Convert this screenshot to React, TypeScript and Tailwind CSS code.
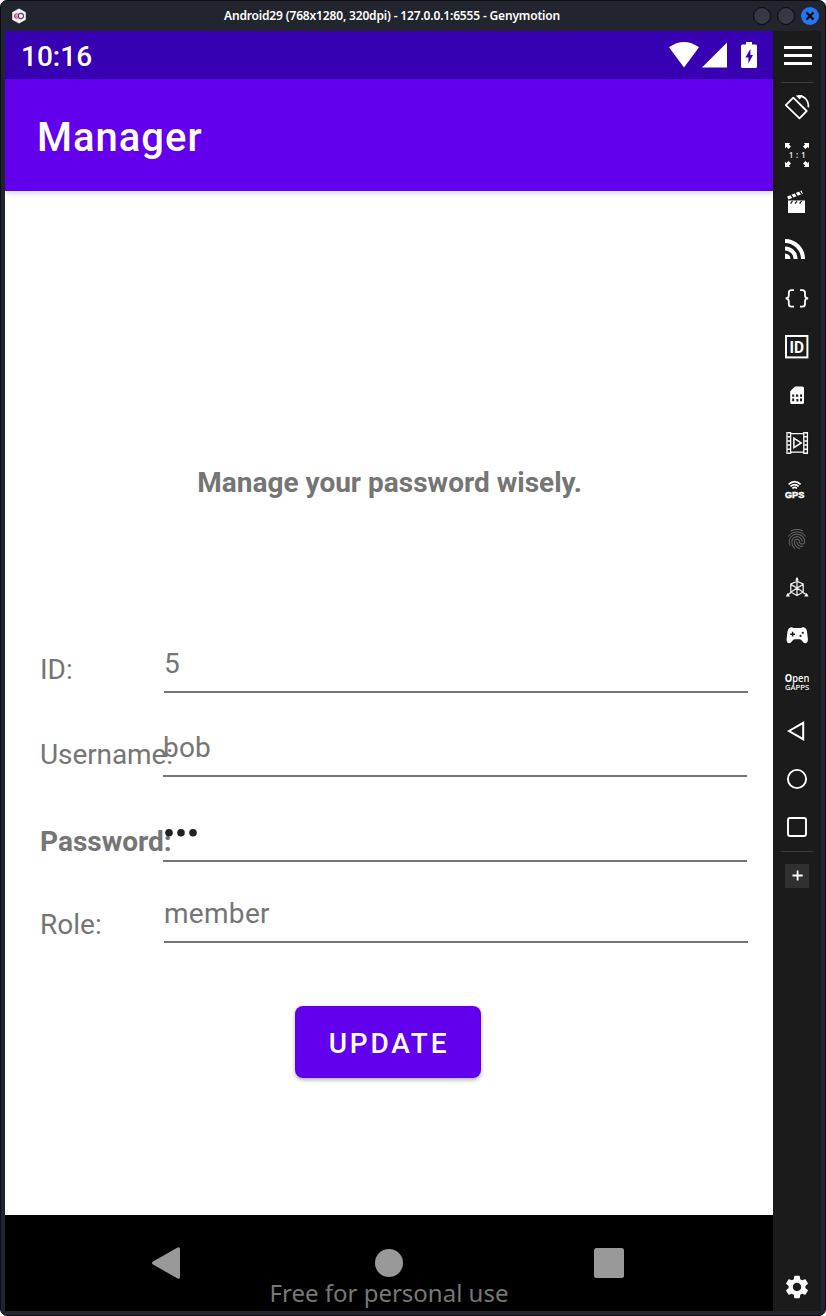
import React from 'react';
import { MdFingerprint, MdSettings } from 'react-icons/md';

function Cell({ children }: { children: React.ReactNode }) {
  return (
    <svg className="block h-12 w-12 shrink-0" viewBox="0 0 48 48" fill="none" stroke="none">
      {children}
    </svg>
  );
}

function Sidebar() {
  return (
    <aside className="flex h-[1280px] w-12 shrink-0 flex-col items-center bg-[#1b1b1b]">
      <div className="flex h-[51px] w-full flex-col items-end gap-[5px] pt-[15px] pr-[9px]">
        <span className="h-[3px] w-7 bg-white" />
        <span className="h-[3px] w-7 bg-white" />
        <span className="h-[3px] w-7 bg-white" />
      </div>
      <div className="h-px w-8 shrink-0 bg-[#3c3c3c]" />
      {/* rotate */}
      <Cell>
        <path d="M12.8 22.2 20.3 14.6 33.7 28 26.5 35.4Z" stroke="#fff" strokeWidth="1.8" strokeLinejoin="round" />
        <path d="M25 13C31 12.6 35.8 17 35.4 24.4" stroke="#fff" strokeWidth="1.7" />
        <path d="M22.6 12.6 29.6 12.2 26.8 16.6Z" fill="#fff" />
      </Cell>
      {/* pixel perfect */}
      <Cell>
        <g fill="#fff">
          <path d="M12 12H17.2L15.9 13.4 18 15.6 15.6 18 13.4 15.9 12 17.2Z" />
          <path d="M36 12H30.8L32.1 13.4 30 15.6 32.4 18 34.6 15.9 36 17.2Z" />
          <path d="M12 36H17.2L15.9 34.6 18 32.4 15.6 30 13.4 32.1 12 30.8Z" />
          <path d="M36 36H30.8L32.1 34.6 30 32.4 32.4 30 34.6 32.1 36 30.8Z" />
        </g>
        <text x="24.3" y="27" textAnchor="middle" className="fill-[#e8e8e8] font-['Noto_Sans'] text-[8px] font-semibold tracking-[0.3px]">1 : 1</text>
      </Cell>
      {/* clapper board */}
      <Cell>
        <path d="M15 21.5H32V34H15Z" fill="#fff" />
        <path d="M14.2 17.4 28.6 11.6 29.8 14.8 15.3 20.4Z" fill="#fff" />
        <path d="M17.6 15.4 20 18.8M22 13.8 24.4 17.2M26.4 12 28.6 15.4M19.5 22 17.6 24.7M24 22 22.1 24.7M28.5 22 26.6 24.7" stroke="#1b1b1b" strokeWidth="1.3" />
      </Cell>
      {/* network */}
      <Cell>
        <path d="M12 14A18 18 0 0 1 30 32M12 21.4A10.6 10.6 0 0 1 22.6 32" stroke="#fff" strokeWidth="4" />
        <path d="M12 26.5A5.5 5.5 0 0 1 17.5 32H12Z" fill="#fff" />
      </Cell>
      {/* braces */}
      <Cell>
        <path d="M21 15.2H18.5Q15.8 15.2 15.8 17.8V20.5Q15.8 23.3 12.6 23.3Q15.8 23.3 15.8 26.2V29Q15.8 31.6 18.5 31.6H21M27 15.2H29.3Q32 15.2 32 17.8V20.5Q32 23.3 35.2 23.3Q32 23.3 32 26.2V29Q32 31.6 29.3 31.6H27" stroke="#fff" strokeWidth="1.8" />
      </Cell>
      {/* identifiers */}
      <Cell>
        <rect x="13" y="13" width="21.4" height="21.4" stroke="#fff" strokeWidth="2" />
        <text x="16.4" y="29.7" className="fill-white font-['Roboto'] text-[16px] font-bold" textLength="14.5" lengthAdjust="spacingAndGlyphs">ID</text>
      </Cell>
      {/* sim */}
      <Cell>
        <path d="M22 15.4H29.4Q31 15.4 31 17V31.4Q31 33 29.4 33H18.8Q17.2 33 17.2 31.4V20.2Z" fill="#fff" />
        <path d="M19.2 23.4h2v2.4h-2zM19.2 27.6h2v2.6h-2zM23 23.4h2.2v2.4H23zM23.4 28h2v2.6h-2zM27 23.4h2v2.4h-2zM27 27.6h2v2.6h-2z" fill="#1b1b1b" />
      </Cell>
      {/* screencast */}
      <Cell>
        <path d="M14 13V35M34.4 13V35M17.6 13V35M30.8 13V35M17 14.6H31M17 33.2H31" stroke="#fff" strokeWidth="1.3" />
        <path d="M15.8 13V35M32.6 13V35" stroke="#fff" strokeWidth="2.8" strokeDasharray="1.5 2.6" />
        <path d="M20.9 19.2 28.2 23.9 20.9 28.6Z" stroke="#fff" strokeWidth="1.5" />
      </Cell>
      {/* gps */}
      <Cell>
        <path d="M15.6 17.3Q21.6 11.8 27.6 17.3M17.5 19.4Q21.6 15.8 25.7 19.4M19.3 21.4Q21.6 19.4 23.9 21.4" stroke="#fff" strokeWidth="1.6" />
        <text x="11.9" y="30.9" className="fill-white font-['Liberation_Sans'] text-[9.4px] font-bold" stroke="#fff" strokeWidth=".45" textLength="19.4" lengthAdjust="spacingAndGlyphs">GPS</text>
      </Cell>
      {/* biometrics */}
      <div className="flex h-12 w-12 shrink-0 items-center justify-center">
        <MdFingerprint className="size-6 text-[#666]" />
      </div>
      {/* motion sensors */}
      <Cell>
        <path d="M24 18.4 30.2 21V29L24 32.6 17.8 29V21ZM17.8 21.4 24 25 30.2 21.4M24 15V32.6M17.8 29.2 24 25 30.2 29.2M17.8 29.6 14 32.2M30.2 29.6 34.4 32.2" stroke="#e8e8e8" strokeWidth="1.3" />
        <path d="M24 13.8 25.8 17.6H22.2ZM12.8 33.4 14.8 30 17 33.4ZM35.6 33.4 33.4 30 31.2 33.4Z" fill="#fff" />
      </Cell>
      {/* gamepad */}
      <Cell>
        <path d="M18.2 16.2Q19.4 16 20.4 16.9H28Q29 16 30.4 16.2Q33.4 16.5 34 20.5L34.9 28Q35 32 32.2 32.3Q30.6 32.2 29.2 30Q28 28.2 26.8 28.2H21.6Q20.4 28.2 19.2 30Q17.8 32.2 16 32.3Q13.4 32 13.6 28L14.5 20.5Q15.2 16.5 18.2 16.2Z" fill="#fff" />
        <path d="M17.2 23.2H22M19.6 20.8V25.6" stroke="#1b1b1b" strokeWidth="1.4" />
        <circle cx="29.8" cy="21.8" r="1.1" fill="#1b1b1b" />
        <circle cx="27.5" cy="24.9" r="1.1" fill="#1b1b1b" />
      </Cell>
      {/* open gapps */}
      <Cell>
        <text x="11.8" y="23" className="fill-white font-['Noto_Sans'] text-[9.8px] font-medium" textLength="24.6" lengthAdjust="spacingAndGlyphs"><tspan className="font-bold">O</tspan>pen</text>
        <text x="12" y="31.1" className="fill-white font-['Noto_Sans'] text-[7.6px] font-medium" textLength="24.2" lengthAdjust="spacingAndGlyphs">GAPPS</text>
      </Cell>
      <Cell><path d="M16 24 30.2 15.8V32.2Z" stroke="#fff" strokeWidth="2" /></Cell>
      <Cell><circle cx="24" cy="24" r="9.1" stroke="#fff" strokeWidth="1.9" /></Cell>
      <Cell><rect x="15" y="15" width="18" height="18" rx="2" stroke="#fff" strokeWidth="1.9" /></Cell>
      <div className="h-px w-8 shrink-0 bg-[#3c3c3c]" />
      <div className="mt-3 flex size-6 items-center justify-center bg-[#303030]">
        <svg className="size-6" viewBox="0 0 24 24"><path d="M7.5 11.5H17.7M12.6 6.5V16.5" stroke="#fff" strokeWidth="1.8" /></svg>
      </div>
      <MdSettings className="mt-auto mr-px mb-[10px] size-[28px] text-white" />
    </aside>
  );
}

const label = "w-[124px] shrink-0 pl-px text-[28px] leading-[33px] whitespace-nowrap";
const field = "h-[50px] w-[584px] shrink-0 border-b-2 border-[#757575] pt-1 text-[28px] leading-[33px]";

export default function App() {
  return (
    <div className="h-[1316px] w-[826px] bg-white">
      <div className="flex h-full flex-col overflow-hidden rounded-[7px] border border-[#0c0d12] bg-[#23252e] px-1">
        <header className="flex h-[30px] shrink-0 items-center">
          <svg className="ml-[6px] h-4 w-4 shrink-0" viewBox="0 0 16 16">
            <path d="M8 .4 14.8 4.2V11.8L8 15.6 1.2 11.8V4.2Z" fill="#f2f0f0" />
            <path d="M7 6.4A2.1 2.1 0 1 0 7 9.6" fill="none" stroke="#d72c68" strokeWidth="1.1" />
            <path d="M3.4 8.1H6.8" stroke="#d72c68" />
            <circle cx="9.9" cy="8" r="2.6" fill="none" stroke="#574080" strokeWidth="1.1" />
          </svg>
          <h1 className="ml-[197px] w-[340px] text-left font-['Noto_Sans'] text-[12px] leading-4 font-semibold tracking-[-0.165px] whitespace-nowrap text-white">Android29 (768x1280, 320dpi) - 127.0.0.1:6555 - Genymotion</h1>
          <div className="ml-auto flex gap-[6px] pr-[2px]">
            <span className="size-[18px] rounded-full border border-[#08090b] bg-[#363945]" />
            <span className="size-[18px] rounded-full border border-[#08090b] bg-[#363945]" />
            <span className="flex size-[18px] items-center justify-center rounded-full bg-[#2777f5]">
              <svg className="size-[18px]" viewBox="0 0 18 18"><path d="M5.4 5.4 12.6 12.6M12.6 5.4 5.4 12.6" stroke="#0c1018" strokeWidth="2.4" /></svg>
            </span>
          </div>
        </header>
        <div className="flex">
          <main className="flex h-[1280px] w-[768px] shrink-0 flex-col bg-white font-['Roboto',sans-serif]">
            <div className="flex h-12 shrink-0 items-center bg-[#3700b3] pl-4 text-white">
              <span className="mt-[3px] text-[28px] leading-[34px] font-medium">10:16</span>
              <svg className="ml-auto h-12 w-[110px]" viewBox="0 0 110 48" fill="#fff">
                <path d="M6 16.2Q21 5.8 36 16.2L21 36.4Z" />
                <path d="M64 11.6V36.6H39Z" />
                <path d="M83 11H89V13.4H92.5Q94 13.4 94 15V35.4Q94 37 92.4 37H79.6Q78 37 78 35.4V15Q78 13.4 79.5 13.4H83Z" />
                <path d="M87.4 18 82.4 26.4H85.4V32.4L90 24H87.4Z" fill="#3700b3" />
              </svg>
            </div>
            <div className="z-10 flex h-28 shrink-0 items-center bg-[#6200ee] pl-8 text-white shadow-[0_2px_6px_rgba(0,0,0,0.18)]">
              <h2 className="mt-[4px] text-[40px] leading-[47px] font-medium tracking-[1px]">Manager</h2>
            </div>
            <section className="flex flex-1 flex-col text-[#757575]">
              <p className="mt-[275px] pl-px text-center text-[28px] leading-[33px] font-bold">Manage your password wisely.</p>
              <div className="mt-[144px] flex flex-col pl-[34px]">
                <div className="flex">
                  <div className={label + " mr-px pt-[10px]"}>ID:</div>
                  <div className={field}>5</div>
                </div>
                <div className="mt-[34px] flex">
                  <div className={label + " pt-[11px] tracking-[-0.1px]"}>Username:</div>
                  <div className={field + " tracking-[0.2px]"}>bob</div>
                </div>
                <div className="mt-[35px] flex">
                  <div className={label + " pt-[13px] font-bold"}>Password:</div>
                  <div className={field + " z-10"}>
                    <svg className="mt-[11px] block h-3 w-10" viewBox="0 0 40 12" fill="#212121">
                      <circle cx="6" cy="5.8" r="3.8" />
                      <circle cx="18" cy="5.8" r="3.8" />
                      <circle cx="30" cy="5.8" r="3.8" />
                    </svg>
                  </div>
                </div>
                <div className="mt-[31px] flex">
                  <div className={label + " mr-px pt-[15px]"}>Role:</div>
                  <div className={field + " tracking-[0.3px]"}>member</div>
                </div>
              </div>
              <button className="mt-[63px] ml-[290px] h-[72px] w-[186px] rounded-[8px] bg-[#6200ee] pt-[2px] pl-[2px] text-[28px] leading-[33px] font-medium tracking-[2.8px] text-white shadow-[0_2px_4px_rgba(0,0,0,0.3)]">UPDATE</button>
            </section>
            <nav className="flex h-24 shrink-0 flex-col bg-black">
              <svg className="h-[65px] w-full shrink-0" viewBox="0 0 768 65" fill="#999">
                <path d="M148 46.4Q146 48 148 49.6L172.6 63.4Q175 64.6 175 62V34Q175 31.4 172.6 32.6Z" />
                <circle cx="384" cy="48" r="14" />
                <rect x="589" y="33" width="30" height="30" rx="2.5" />
              </svg>
              <p className="-mt-[4px] text-center font-['Noto_Sans'] text-[24px] leading-[33px] text-[#777]">Free for personal use</p>
            </nav>
          </main>
          <Sidebar />
        </div>
      </div>
    </div>
  );
}
